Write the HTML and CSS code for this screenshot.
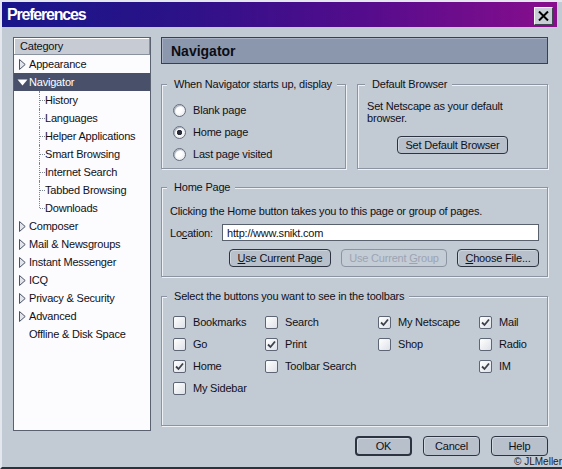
FILE: index.html
```html
<!DOCTYPE html>
<html>
<head>
<meta charset="utf-8">
<title>Preferences</title>
<link rel="stylesheet" href="styles.css">
</head>
<body>
<div class="window">
  <div class="titlebar">
    <span class="title">Preferences</span>
    <button class="close" aria-label="Close"><svg width="11" height="10" viewBox="0 0 11 10"><path d="M1 0.5 L10 9.5 M10 0.5 L1 9.5" stroke="#000" stroke-width="2" fill="none"/></svg></button>
  </div>
  <div class="main">
    <div class="tree">
      <div class="tree-head">Category</div>
      <div class="row"><span class="twisty"><svg width="7" height="11" viewBox="0 0 7 11"><path d="M0.5 0.5 L6.2 5.5 L0.5 10.5 Z" fill="#e2e6ec" stroke="#4a5264" stroke-width="1"/></svg></span>Appearance</div>
      <div class="row selected"><span class="twisty"><svg width="11" height="7" viewBox="0 0 11 7"><path d="M0.5 0.5 L10.5 0.5 L5.5 6.5 Z" fill="#ffffff"/></svg></span>Navigator</div>
      <div class="children">
        <div class="child">History</div>
        <div class="child">Languages</div>
        <div class="child">Helper Applications</div>
        <div class="child">Smart Browsing</div>
        <div class="child">Internet Search</div>
        <div class="child">Tabbed Browsing</div>
        <div class="child">Downloads</div>
      </div>
      <div class="row"><span class="twisty"><svg width="7" height="11" viewBox="0 0 7 11"><path d="M0.5 0.5 L6.2 5.5 L0.5 10.5 Z" fill="#e2e6ec" stroke="#4a5264" stroke-width="1"/></svg></span>Composer</div>
      <div class="row"><span class="twisty"><svg width="7" height="11" viewBox="0 0 7 11"><path d="M0.5 0.5 L6.2 5.5 L0.5 10.5 Z" fill="#e2e6ec" stroke="#4a5264" stroke-width="1"/></svg></span>Mail &amp; Newsgroups</div>
      <div class="row"><span class="twisty"><svg width="7" height="11" viewBox="0 0 7 11"><path d="M0.5 0.5 L6.2 5.5 L0.5 10.5 Z" fill="#e2e6ec" stroke="#4a5264" stroke-width="1"/></svg></span>Instant Messenger</div>
      <div class="row"><span class="twisty"><svg width="7" height="11" viewBox="0 0 7 11"><path d="M0.5 0.5 L6.2 5.5 L0.5 10.5 Z" fill="#e2e6ec" stroke="#4a5264" stroke-width="1"/></svg></span>ICQ</div>
      <div class="row"><span class="twisty"><svg width="7" height="11" viewBox="0 0 7 11"><path d="M0.5 0.5 L6.2 5.5 L0.5 10.5 Z" fill="#e2e6ec" stroke="#4a5264" stroke-width="1"/></svg></span>Privacy &amp; Security</div>
      <div class="row"><span class="twisty"><svg width="7" height="11" viewBox="0 0 7 11"><path d="M0.5 0.5 L6.2 5.5 L0.5 10.5 Z" fill="#e2e6ec" stroke="#4a5264" stroke-width="1"/></svg></span>Advanced</div>
      <div class="row"><span class="twisty"></span>Offline &amp; Disk Space</div>
    </div>

    <div class="content">
      <div class="pane-title">Navigator</div>

      <div class="group-row">
        <fieldset class="group startup">
          <legend>When Navigator starts up, display</legend>
          <div class="opt"><span class="rb"></span>Blank page</div>
          <div class="opt"><span class="rb on"></span>Home page</div>
          <div class="opt"><span class="rb"></span>Last page visited</div>
        </fieldset>
        <fieldset class="group default-browser">
          <legend>Default Browser</legend>
          <p class="db-text">Set Netscape as your default<br>browser.</p>
          <div class="db-btn"><button class="btn sdb">Set Default Browser</button></div>
        </fieldset>
      </div>

      <fieldset class="group homepage">
        <legend>Home Page</legend>
        <p class="hp-text">Clicking the Home button takes you to this page or group of pages.</p>
        <div class="loc-row">
          <span class="loc-label">Lo<u>c</u>ation:</span>
          <input class="loc-input" type="text" value="http://www.snikt.com">
        </div>
        <div class="hp-buttons">
          <button class="btn b-page"><u>U</u>se Current Page</button>
          <button class="btn b-group" disabled>Use Current <u>G</u>roup</button>
          <button class="btn b-file"><u>C</u>hoose File...</button>
        </div>
      </fieldset>

      <fieldset class="group toolbars">
        <legend>Select the buttons you want to see in the toolbars</legend>
        <div class="cols">
          <div class="col c1">
            <div class="opt"><span class="cb"></span>Bookmarks</div>
            <div class="opt"><span class="cb"></span>Go</div>
            <div class="opt"><span class="cb"><svg width="11" height="11" viewBox="0 0 11 11"><path d="M2 5.5 L4.5 8 L9 2.5" stroke="#3c414c" stroke-width="1.8" fill="none"/></svg></span>Home</div>
            <div class="opt"><span class="cb"></span>My Sidebar</div>
          </div>
          <div class="col c2">
            <div class="opt"><span class="cb"></span>Search</div>
            <div class="opt"><span class="cb"><svg width="11" height="11" viewBox="0 0 11 11"><path d="M2 5.5 L4.5 8 L9 2.5" stroke="#3c414c" stroke-width="1.8" fill="none"/></svg></span>Print</div>
            <div class="opt"><span class="cb"></span>Toolbar Search</div>
          </div>
          <div class="col c3">
            <div class="opt"><span class="cb"><svg width="11" height="11" viewBox="0 0 11 11"><path d="M2 5.5 L4.5 8 L9 2.5" stroke="#3c414c" stroke-width="1.8" fill="none"/></svg></span>My Netscape</div>
            <div class="opt"><span class="cb"></span>Shop</div>
          </div>
          <div class="col c4">
            <div class="opt"><span class="cb"><svg width="11" height="11" viewBox="0 0 11 11"><path d="M2 5.5 L4.5 8 L9 2.5" stroke="#3c414c" stroke-width="1.8" fill="none"/></svg></span>Mail</div>
            <div class="opt"><span class="cb"></span>Radio</div>
            <div class="opt"><span class="cb"><svg width="11" height="11" viewBox="0 0 11 11"><path d="M2 5.5 L4.5 8 L9 2.5" stroke="#3c414c" stroke-width="1.8" fill="none"/></svg></span>IM</div>
          </div>
        </div>
      </fieldset>
    </div>
  </div>

  <div class="footer">
    <button class="btn fbtn ok">OK</button>
    <button class="btn fbtn">Cancel</button>
    <button class="btn fbtn">Help</button>
  </div>
  <span class="copyright">© JLMeller</span>
</div>
</body>
</html>
```

FILE: styles.css
```css
* { box-sizing: border-box; }
html, body { margin: 0; padding: 0; }
body {
  width: 562px;
  height: 469px;
  overflow: hidden;
  background: #c2cad4;
  font-family: "Liberation Sans", Arial, sans-serif;
  font-size: 11px;
  letter-spacing: -0.2px;
  color: #101018;
}
.window {
  position: relative;
  width: 562px;
  height: 469px;
  background: #c2cad4;
  border-left: 2px solid #e4e8ee;
  border-top: 2px solid #e4e8ee;
  border-bottom: 2px solid #2c323c;
}
.titlebar {
  height: 25px;
  margin-right: 5px;
  background: linear-gradient(90deg, #18168a 0%, #2a1288 30%, #540c8c 65%, #880e8c 100%);
  display: flex;
  align-items: flex-end;
  justify-content: space-between;
  padding: 0 4px 2px 5px;
}
.title {
  align-self: center;
  margin-top: 2px;
  color: #ffffff;
  font-family: "Liberation Sans", sans-serif;
  font-weight: bold;
  font-size: 16px;
  letter-spacing: -1.2px;
}
.close {
  width: 19px;
  height: 18px;
  padding: 0;
  margin: 0;
  background: #c8ced6;
  border: 1px solid;
  border-color: #ffffff #404650 #404650 #ffffff;
  display: flex;
  align-items: center;
  justify-content: center;
}
.main {
  display: flex;
  height: 404px;
  padding: 10px 0 0 11px;
}
.tree {
  width: 138px;
  height: 394px;
  border: 1px solid #5a6272;
  background: #fcfbfe;
  flex: none;
}
.tree-head {
  height: 17px;
  line-height: 16px;
  padding-left: 6px;
  background: #c6cbd4;
  border-bottom: 1px solid #8a92a0;
  border-right: 1px solid #8a92a0;
  box-shadow: inset 1px 1px 0 #ffffff;
}
.row {
  height: 18px;
  display: flex;
  align-items: center;
  padding-left: 3px;
}
.row.selected {
  background: #49516a;
  color: #ffffff;
}
.twisty {
  width: 11px;
  height: 11px;
  margin-right: 1px;
  display: flex;
  align-items: center;
  justify-content: center;
}
.children {
  padding-left: 25px;
}
.child {
  position: relative;
  height: 18px;
  line-height: 18px;
  padding-left: 6px;
}
.child::before {
  content: "";
  position: absolute;
  left: 0;
  top: 0;
  bottom: 0;
  border-left: 1px dotted #7c8490;
}
.child:last-child::before { bottom: 9px; }
.child::after {
  content: "";
  position: absolute;
  left: 1px;
  top: 9px;
  width: 5px;
  border-top: 1px dotted #7c8490;
}
.content {
  width: 387px;
  margin-left: 10px;
}
.pane-title {
  height: 27px;
  display: flex;
  align-items: center;
  padding-left: 9px;
  background: #8b97ad;
  border: 1px solid #394050;
  box-shadow: inset 1px 1px 0 #a8b2c4;
  font-weight: bold;
  font-size: 14px;
  letter-spacing: 0;
  color: #0c0c14;
}
fieldset.group {
  margin: 0;
  min-width: 0;
  border: 1px solid #8c94a2;
  box-shadow: inset 1px 1px 0 #eef1f5, 1px 1px 0 #eef1f5;
}
fieldset.group legend {
  line-height: 13px;
  padding: 0 5px 0 7px;
  background: #c2cad4;
}
.group-row {
  display: flex;
  gap: 11px;
  margin-top: 14px;
}
fieldset.startup {
  width: 185px;
  flex: none;
  padding: 8px 6px 3px 11px;
}
fieldset.startup legend { margin-left: -6px; }
fieldset.default-browser {
  flex: 1;
  padding: 9px 6px 3px 9px;
}
fieldset.default-browser legend { margin-left: -2px; }
.db-text {
  margin: 0;
  line-height: 12px;
}
.db-btn {
  display: flex;
  justify-content: center;
  margin-top: 12px;
  margin-left: -9px;
  margin-right: -6px;
}
.opt {
  height: 22px;
  display: flex;
  align-items: center;
  gap: 7px;
  white-space: nowrap;
}
.rb {
  width: 13px;
  height: 13px;
  flex: none;
  border-radius: 50%;
  border: 1px solid #666e7e;
  background: radial-gradient(circle at 40% 40%, #ffffff 35%, #dadfe6 100%);
  box-shadow: inset 1px 1px 1px #a4acb8;
}
.rb.on {
  background: radial-gradient(circle, #2a2e38 0 2.4px, transparent 3px), radial-gradient(circle at 40% 40%, #ffffff 35%, #dadfe6 100%);
}
.cb {
  width: 13px;
  height: 13px;
  flex: none;
  border: 1px solid #5e6676;
  border-radius: 2px;
  background: linear-gradient(135deg, #ffffff, #dde1e8);
  display: flex;
  align-items: center;
  justify-content: center;
}
.btn {
  height: 18px;
  padding: 0;
  margin: 0;
  font: inherit;
  letter-spacing: -0.2px;
  color: #101018;
  background: #b8c0cc;
  border: 1px solid #2c3442;
  border-radius: 4px;
  box-shadow: inset 1px 1px 0 #d0d6de;
}
.sdb { width: 111px; }
fieldset.homepage {
  margin-top: 12px;
  padding: 11px 8px 9px 8px;
}
fieldset.homepage legend { margin-left: -3px; }
.hp-text {
  margin: 0;
  line-height: 13px;
  white-space: nowrap;
}
.loc-row {
  display: flex;
  align-items: center;
  margin-top: 6px;
}
.loc-label {
  width: 52px;
  flex: none;
}
.loc-input {
  width: 317px;
  height: 17px;
  margin: 0;
  padding: 0 4px;
  border: 1px solid #59616f;
  background: #ffffff;
  font: inherit;
  letter-spacing: -0.2px;
  color: #101018;
  outline: none;
}
.hp-buttons {
  display: flex;
  justify-content: flex-end;
  gap: 10px;
  margin-top: 8px;
}
.b-page { width: 102px; }
.b-group {
  width: 106px;
  background: #c4ccd6;
  border-color: #8c94a2;
  color: #9ca4b2;
  box-shadow: none;
}
.b-file { width: 82px; }
fieldset.toolbars {
  margin-top: 13px;
  padding: 8px 8px 26px 11px;
}
fieldset.toolbars legend { margin-left: -6px; }
.cols { display: flex; }
.col { display: flex; flex-direction: column; }
.c1 { width: 92px; }
.c2 { width: 113px; }
.c3 { width: 101px; }
.footer {
  display: flex;
  justify-content: flex-end;
  gap: 11px;
  margin-top: 5px;
  padding-right: 14px;
}
.fbtn {
  width: 57px;
  height: 20px;
}
.ok { border-width: 2px; }
.copyright {
  position: absolute;
  right: 0;
  bottom: 0;
  font-size: 10px;
  line-height: 10px;
  letter-spacing: 0;
  color: #202024;
}
```
